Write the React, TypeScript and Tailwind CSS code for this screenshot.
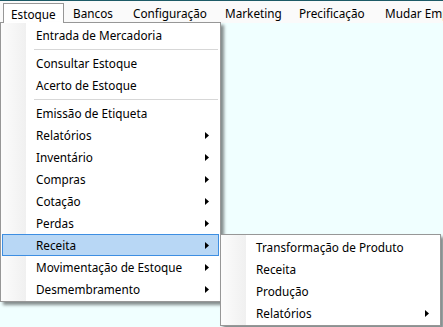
const font = { fontFamily: '"Noto Sans", "Liberation Sans", Arial, sans-serif' };

type Item = { label: string; sub?: boolean; active?: boolean } | "sep";

const estoque: Item[] = [
  { label: "Entrada de Mercadoria" },
  "sep",
  { label: "Consultar Estoque" },
  { label: "Acerto de Estoque" },
  "sep",
  { label: "Emissão de Etiqueta" },
  { label: "Relatórios", sub: true },
  { label: "Inventário", sub: true },
  { label: "Compras", sub: true },
  { label: "Cotação", sub: true },
  { label: "Perdas", sub: true },
  { label: "Receita", sub: true, active: true },
  { label: "Movimentação de Estoque", sub: true },
  { label: "Desmembramento", sub: true },
];

const receita: Item[] = [
  { label: "Transformação de Produto" },
  { label: "Receita" },
  { label: "Produção" },
  { label: "Relatórios", sub: true },
];

const bar = [
  { label: "Bancos", cls: "w-[59px] pl-[9px]" },
  { label: "Configuração", cls: "w-[92px] pl-[10px]" },
  { label: "Marketing", cls: "w-[74px] pl-[10px]" },
  { label: "Precificação", cls: "w-[86px] pl-[10px]" },
  { label: "Mudar Empresa", cls: "w-[90px] pl-[10px]" },
];

const Arrow = () => (
  <svg width="4" height="7" viewBox="0 0 4 7" className="shrink-0">
    <path d="M0 0 L4 3.5 L0 7 Z" fill="#000" />
  </svg>
);

const Menu = ({ items }: { items: Item[] }) => (
  <div className="relative flex flex-col border border-[#979797] bg-white px-[1px] pt-[1px] pb-[1px] shadow-[3px_3px_3px_rgba(0,0,0,0.45)]">
    <div className="absolute left-0 top-0 bottom-0 w-[25px] bg-gradient-to-r from-[#fcfcfc] to-[#f0f0f0]" />
    {items.map((it, i) =>
      it === "sep" ? (
        <div key={i} className="relative flex h-[6px] items-center pl-[32px] pr-[1px]">
          <div className="h-[1px] w-full bg-[#d7d7d7]" />
        </div>
      ) : (
        <div
          key={i}
          className={`relative flex h-[22px] items-center text-[11.75px] text-black ${
            it.active
              ? "border border-[#3d8ee2] bg-[#b8d7f5] pl-[33px] pr-[9px]"
              : "pl-[34px] pr-[10px]"
          }`}
        >
          <span className="flex-1 whitespace-nowrap pt-[2px]">{it.label}</span>
          {it.sub && <Arrow />}
        </div>
      )
    )}
  </div>
);

export default function App() {
  return (
    <div className="relative h-[327px] w-[443px] overflow-hidden bg-[#f0ffff]" style={font}>
      <div className="flex h-[23px] items-end overflow-hidden border-t border-[#1c5a66] bg-[#fafafa] pl-[3px] text-[11.75px] text-black">
        <div className="flex h-[20px] w-[61px] shrink-0 items-center border border-b-0 border-[#979797] bg-white pl-[7px] pt-[2px]">
          Estoque
        </div>
        {bar.map((b) => (
          <div key={b.label} className={`flex h-[20px] shrink-0 items-center whitespace-nowrap pt-[2px] ${b.cls}`}>
            {b.label}
          </div>
        ))}
      </div>
      <div className="absolute left-0 top-[22px] w-[221px]">
        <Menu items={estoque} />
      </div>
      <div className="absolute left-[4px] top-[22px] h-[1px] w-[59px] bg-white" />
      <div className="absolute left-[220px] top-[234px] w-[221px]">
        <Menu items={receita} />
      </div>
    </div>
  );
}
